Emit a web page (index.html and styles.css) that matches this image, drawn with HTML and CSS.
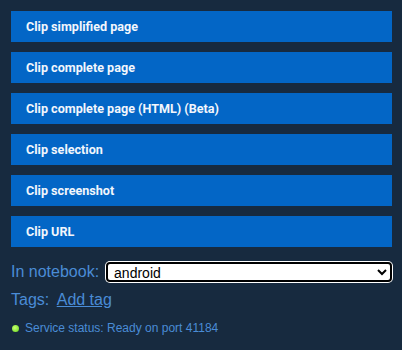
FILE: index.html
```html
<!DOCTYPE html>
<html lang="en">
<head>
<meta charset="UTF-8">
<title>Clipper</title>
<link rel="stylesheet" href="styles.css">
</head>
<body>
<div class="popup">
  <div class="actions">
    <button class="clip-btn">Clip simplified page</button>
    <button class="clip-btn">Clip complete page</button>
    <button class="clip-btn">Clip complete page (HTML) (Beta)</button>
    <button class="clip-btn">Clip selection</button>
    <button class="clip-btn">Clip screenshot</button>
    <button class="clip-btn">Clip URL</button>
  </div>

  <div class="notebook-row">
    <label for="notebook">In notebook:</label>
    <select id="notebook">
      <option>android</option>
    </select>
  </div>

  <div class="tags-row">
    <span>Tags:</span>
    <a href="#" class="add-tag">Add tag</a>
  </div>

  <div class="status">
    <span class="dot"></span>
    Service status: Ready on port 41184
  </div>
</div>
</body>
</html>
```

FILE: styles.css
```css
html, body {
  margin: 0;
  padding: 0;
  height: 100%;
}
body {
  background-color: #172a3f;
  font-family: "Liberation Sans", Arial, sans-serif;
  color: #4a8cd6;
}
.popup {
  padding: 11px 10px 11px 11px;
}
.actions {
  display: flex;
  flex-direction: column;
  gap: 10px;
}
.clip-btn {
  display: block;
  width: 100%;
  height: 31px;
  padding: 0 15px;
  background-color: #0366c6;
  color: #f2f6fc;
  border: none;
  text-align: left;
  font-family: Roboto, sans-serif;
  font-weight: 700;
  font-size: 12.6px;
  cursor: pointer;
}
.notebook-row {
  display: flex;
  align-items: center;
  margin-top: 15px;
  font-size: 16px;
}
.notebook-row label {
  margin-right: 7px;
}
.notebook-row select {
  flex: 1;
  height: 20px;
  font-family: "Liberation Sans", Arial, sans-serif;
  font-size: 14px;
  color: #000;
  background: #fff;
  border: 2px solid #000;
  border-radius: 4px;
  box-shadow: 0 0 0 1px #fff;
  padding: 0 2px;
}
.tags-row {
  margin-top: 9px;
  font-size: 16px;
}
.add-tag {
  color: #4a8cd6;
  margin-left: 3px;
}
.status {
  display: flex;
  align-items: center;
  margin-top: 12px;
  font-size: 12px;
}
.dot {
  width: 7px;
  height: 7px;
  border-radius: 50%;
  background: radial-gradient(circle at 40% 40%, #c8ff70, #66d71c);
  margin: 0 6px 0 1px;
}
```
